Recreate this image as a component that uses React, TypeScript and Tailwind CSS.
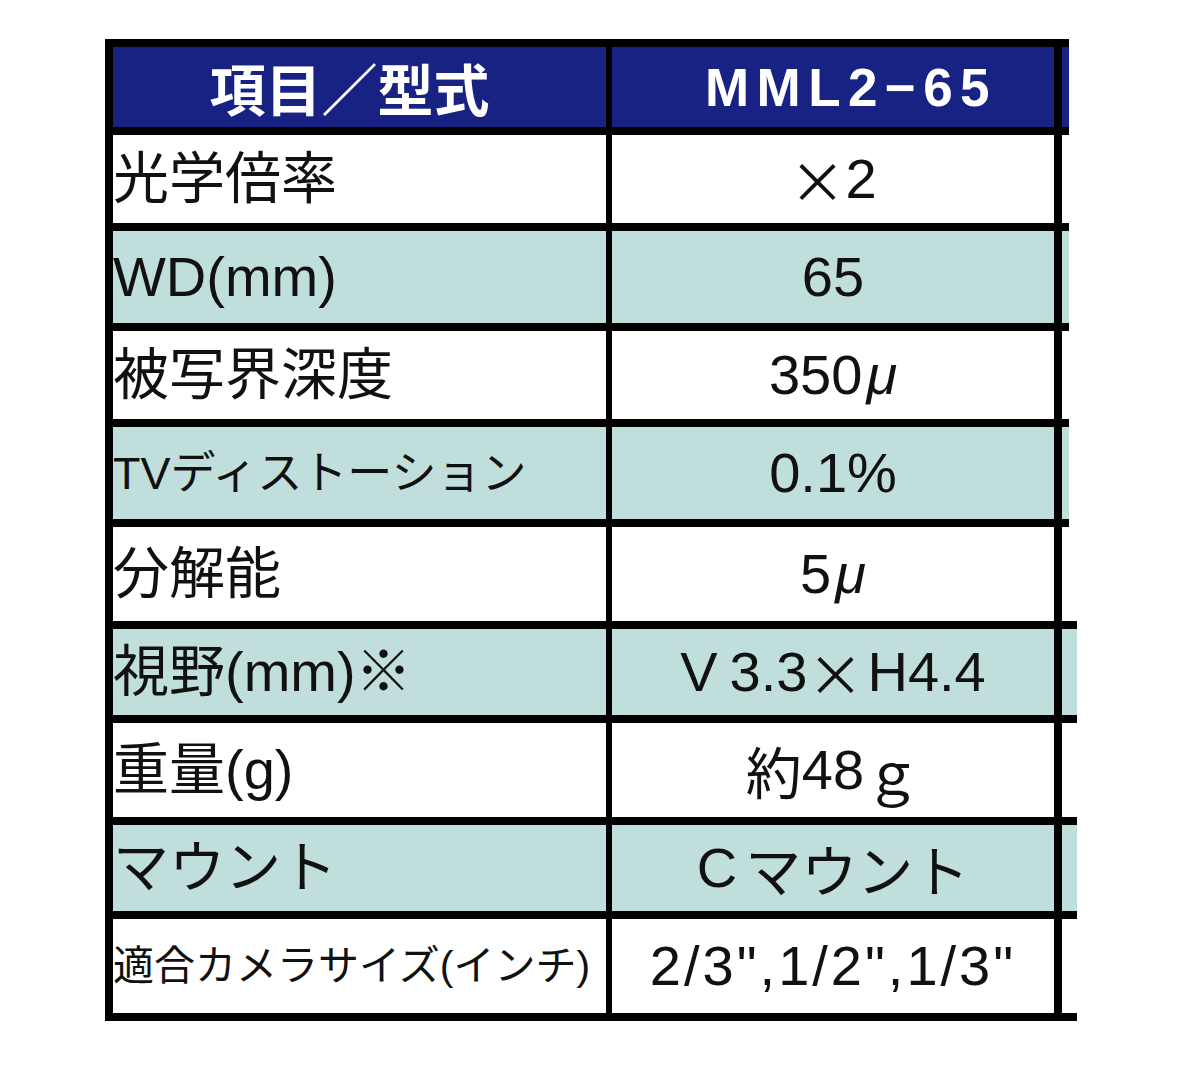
import React from "react";

const LATIN = "font-['Liberation_Sans','Noto_Sans_CJK_JP',sans-serif]";
const CJK = "font-['Noto_Sans_CJK_JP',sans-serif]";

type Row = {
  label: React.ReactNode;
  value: React.ReactNode;
  h: string;
  teal?: boolean;
  wide?: boolean;
  labelSize?: string;
  valueExtra?: string;
};

const X = <span className={CJK}>×</span>;
const MU = <span className="ml-1 italic">μ</span>;

// heights include the 8px top border (border-box)
const rows: Row[] = [
  { label: "光学倍率", value: <>{X}2</>, h: "h-[96px]" },
  { label: "WD(mm)", value: "65", h: "h-[100px]", teal: true },
  { label: "被写界深度", value: <>350{MU}</>, h: "h-[96px]" },
  {
    label: "TVディストーション",
    value: "0.1%",
    h: "h-[100px]",
    teal: true,
    labelSize: "text-[45px]",
  },
  { label: "分解能", value: <>5{MU}</>, h: "h-[102px]" },
  {
    label: "視野(mm)※",
    value: (
      <>
        V<span className="ml-3">3.3</span>
        {X}
        <span className="ml-1">H4.4</span>
      </>
    ),
    h: "h-[94px]",
    teal: true,
    wide: true,
  },
  {
    label: "重量(g)",
    value: (
      <>
        <span className={CJK}>約</span>48<span className={CJK}>ｇ</span>
      </>
    ),
    h: "h-[102px]",
    wide: true,
  },
  {
    label: "マウント",
    value: (
      <>
        C<span className={`${CJK} ml-2`}>マウント</span>
      </>
    ),
    h: "h-[94px]",
    teal: true,
    wide: true,
  },
  {
    label: "適合カメラサイズ(インチ)",
    value: '2/3",1/2",1/3"',
    h: "h-[110px]",
    wide: true,
    labelSize: "text-[41px]",
    valueExtra: "tracking-[3px]",
  },
];

function TableRow({ row, last }: { row: Row; last: boolean }) {
  const bg = row.teal ? "bg-[#c0dedb]" : "bg-white";
  return (
    <div
      className={`flex border-t-8 border-black ${last ? "border-b-8" : ""} ${
        row.wide ? "w-[972px]" : "w-[964px]"
      } ${row.h}`}
    >
      <div
        className={`w-[501px] border-l-8 border-black ${bg} flex items-center overflow-hidden whitespace-nowrap ${LATIN} ${
          row.labelSize ?? "text-[56px]"
        } leading-none text-[#111]`}
      >
        {row.label}
      </div>
      <div
        className={`w-[448px] border-l-[6px] border-black ${bg} flex items-center justify-center whitespace-nowrap ${LATIN} text-[56px] leading-none text-[#111] ${
          row.valueExtra ?? ""
        }`}
      >
        {row.value}
      </div>
      <div className={`flex-1 border-l-8 border-black ${bg}`} />
    </div>
  );
}

export default function App() {
  return (
    <div className="w-[1200px] h-[1069px] bg-white pt-[39px] pl-[105px]">
      <div className="flex flex-col">
        <div className="flex border-t-8 border-black w-[964px] h-[88px]">
          <div
            className={`w-[501px] border-l-8 border-black bg-[#172282] flex items-center justify-center ${CJK} font-bold text-[56px] leading-none text-white pr-[20px]`}
          >
            項目／型式
          </div>
          <div
            className={`w-[448px] border-l-[6px] border-black bg-[#172282] flex items-center justify-center font-['Liberation_Sans',sans-serif] font-bold text-[53px] tracking-[0.14em] leading-none text-white pl-[36px]`}
          >
            MML2−65
          </div>
          <div className="flex-1 border-l-8 border-black bg-[#172282]" />
        </div>
        {rows.map((r, i) => (
          <TableRow key={i} row={r} last={i === rows.length - 1} />
        ))}
      </div>
    </div>
  );
}
